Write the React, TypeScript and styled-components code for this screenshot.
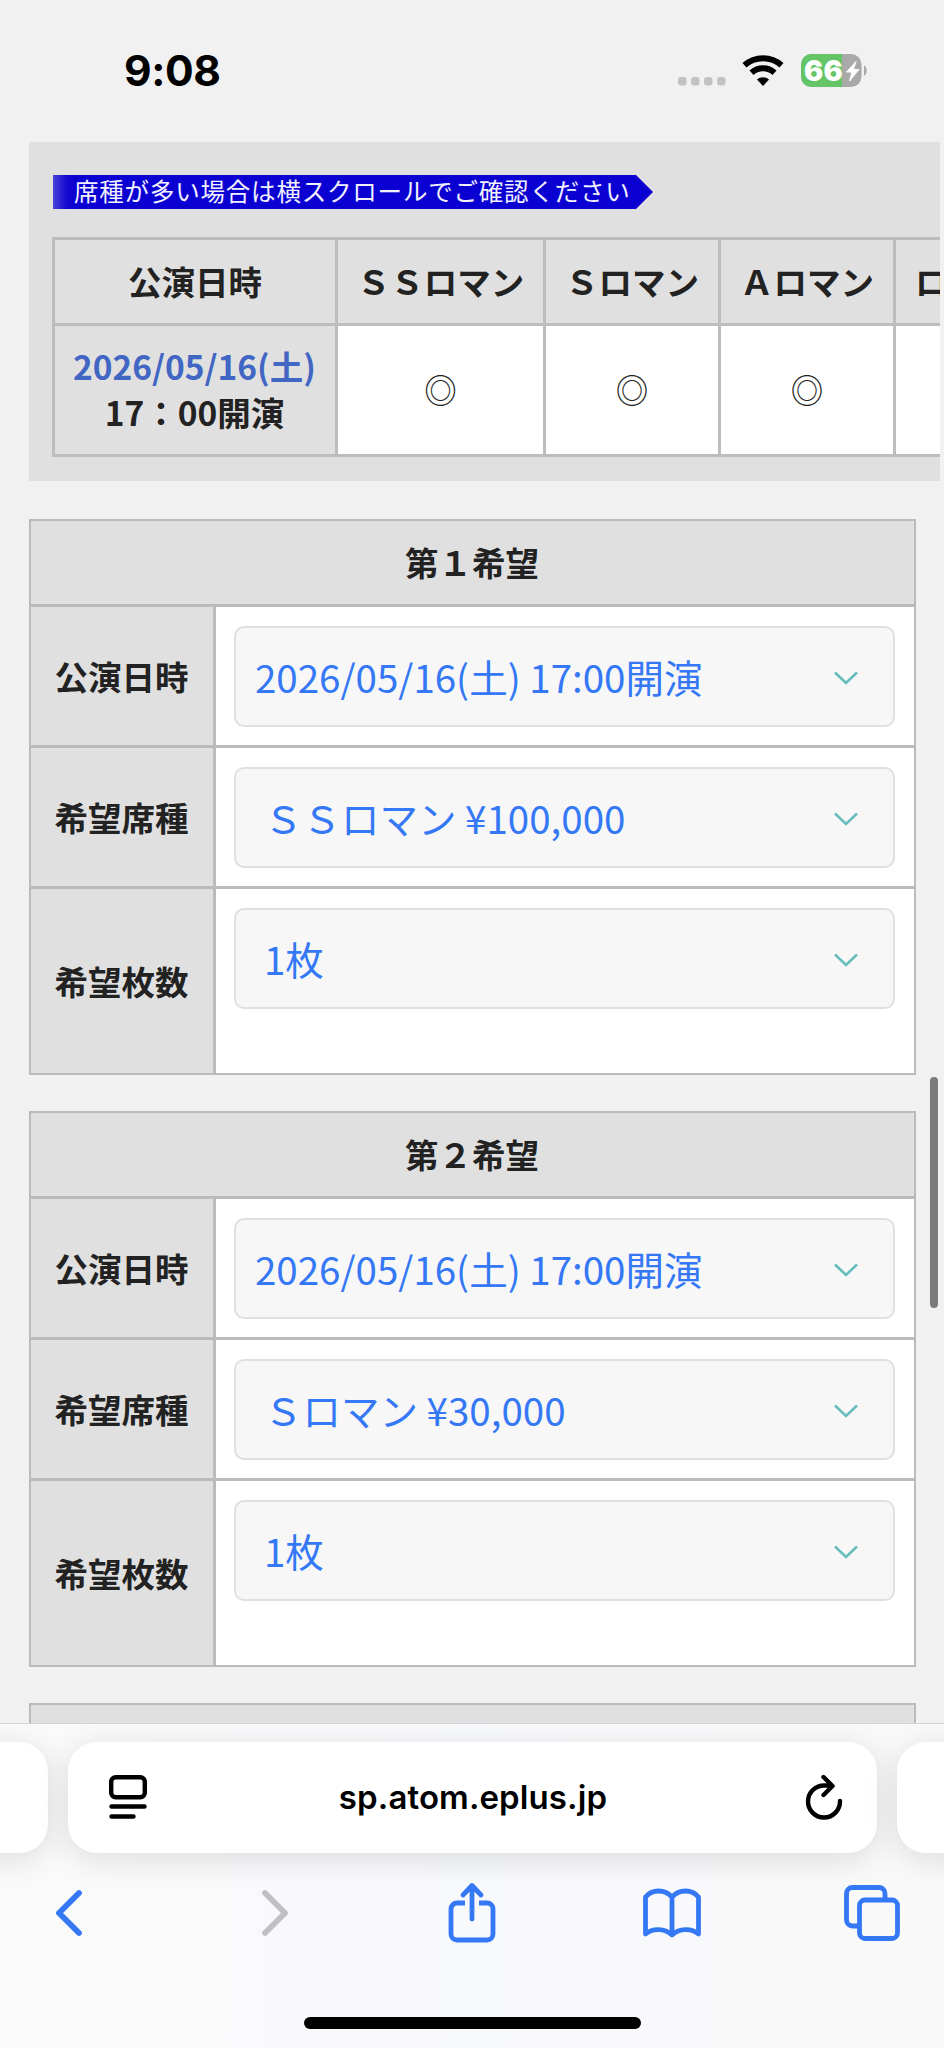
import React from 'react';
import styled, { createGlobalStyle } from 'styled-components';

const GlobalStyle = createGlobalStyle`
  * { box-sizing: border-box; }
  html, body { margin: 0; padding: 0; }
  body {
    background: #f1f1f1;
    color: #222;
    font-family: "Noto Sans CJK JP", sans-serif;
  }
`;

const Screen = styled.div`
  position: relative;
  width: 944px;
  height: 2048px;
  overflow: hidden;
  background: #f1f1f1;
  display: flex;
  flex-direction: column;
`;

const StatusBar = styled.header`
  flex: none;
  height: 142px;
  display: flex;
  align-items: flex-start;
  justify-content: space-between;
  padding: 46px 75px 0 124px;
`;

const Clock = styled.div`
  font: 700 42.5px/49px Inter, sans-serif;
  letter-spacing: -0.4px;
  color: #000;
`;

const StatusIcons = styled.div`
  display: flex;
  align-items: flex-start;
  svg { display: block; }
`;

const StatusGlyph = styled.div<{ $top: number; $gap: number }>`
  margin: ${(p) => p.$top}px ${(p) => p.$gap}px 0 0;
`;

const Battery = styled.div`
  position: relative;
  width: 68px;
  height: 33px;
  margin: 8px 0 0 17px;
`;

const BatteryLevel = styled.span`
  position: absolute;
  left: 3px;
  top: 0;
  font: 900 28.5px/34px Inter, sans-serif;
  letter-spacing: 0.2px;
  color: #fff;
`;

const Page = styled.main`
  flex: none;
  height: 1581px;
  overflow: hidden;
  padding-left: 29px;
  display: flex;
  flex-direction: column;
`;

const AvailabilityPanel = styled.section`
  flex: none;
  width: 911px;
  height: 339px;
  padding: 33px 0 0 23px;
  background: #e0e0e0;
  overflow: hidden;
`;

const ScrollHint = styled.div`
  width: 600px;
  height: 34px;
  padding-left: 21px;
  margin-left: 1px;
  background: linear-gradient(90deg, #4a44d8 0, #1208d0 14px, #0b00d2 22px);
  clip-path: polygon(0 0, 583px 0, 100% 50%, 583px 100%, 0 100%);
  color: #f0f0ff;
  font-size: 24.5px;
  line-height: 32px;
  letter-spacing: 0.8px;
  white-space: nowrap;
`;

const SeatTable = styled.table`
  border-collapse: collapse;
  table-layout: fixed;
  width: 1018px;
  margin-top: 28px;
`;

const SeatHead = styled.th<{ $left?: boolean }>`
  height: 86px;
  padding: 0 0 2px ${(p) => (p.$left ? 19 : 0)}px;
  border: 3px solid #bdbdbd;
  text-align: ${(p) => (p.$left ? 'left' : 'center')};
  font-size: 33.5px;
  font-weight: 700;
  line-height: 46px;
  white-space: nowrap;
`;

const SeatDate = styled(SeatHead)`
  height: 131px;
  padding: 0 1px 2px 0;
`;

const DateText = styled.span`
  display: block;
  color: #4266c4;
`;

const SeatMark = styled.td`
  padding: 0 0 2px;
  border: 3px solid #bdbdbd;
  background: #fff;
  text-align: center;
  font-size: 32.5px;
  line-height: 46px;
`;

const WishTable = styled.section`
  flex: none;
  width: 887px;
  margin-top: 38px;
  border: 2px solid #bbb;
  background: #bbb;
  display: grid;
  grid-template-columns: 182px 1fr;
  gap: 3px;
  & + & { margin-top: 36px; }
`;

const WishTitle = styled.h2`
  grid-column: 1 / -1;
  height: 83px;
  margin: 0;
  padding: 0 1px 2px 0;
  background: #e0e0e0;
  display: flex;
  align-items: center;
  justify-content: center;
  font-size: 33.5px;
  line-height: 46px;
`;

const FieldLabel = styled.div`
  background: #e0e0e0;
  display: flex;
  align-items: center;
  justify-content: center;
  padding: 0 1px 1px 0;
  font-size: 33.5px;
  font-weight: 700;
  line-height: 46px;
`;

const FieldCell = styled.div<{ $last?: boolean }>`
  height: ${(p) => (p.$last ? 184 : 138)}px;
  padding: 19px 19px 0 18px;
  background: #fff;
`;

const SelectBox = styled.div<{ $indent: number }>`
  height: 101px;
  border: 2px solid #e0e0e0;
  border-radius: 10px;
  background: #f7f7f7;
  padding: 0 35px 2px ${(p) => p.$indent}px;
  display: flex;
  align-items: center;
  justify-content: space-between;
  color: #3478f6;
  font-size: 38.5px;
  line-height: 56px;
  white-space: pre;
  svg { margin-top: 4px; }
`;

const ScrollThumb = styled.div`
  position: absolute;
  left: 930px;
  top: 1077px;
  width: 8px;
  height: 231px;
  border-radius: 4px;
  background: #7b7b7b;
`;

const BrowserBar = styled.footer`
  flex: none;
  height: 325px;
  overflow: hidden;
  border-top: 1px solid #d4d4d4;
  background: linear-gradient(90deg, #fafafa, #f8f9fc 50%, #f9f9f9);
  display: flex;
  flex-direction: column;
`;

const TabStrip = styled.div`
  flex: none;
  display: flex;
  gap: 20px;
  margin-top: 18px;
  margin-left: -60px;
  width: 1064px;
`;

const TabCard = styled.div<{ $width: number }>`
  flex: none;
  width: ${(p) => p.$width}px;
  height: 111px;
  border-radius: 29px;
  background: #fff;
  box-shadow: 0 6px 32px rgba(0, 0, 0, 0.12);
  display: flex;
  align-items: center;
  justify-content: space-between;
  padding: 0 34px 1px 41px;
  svg { display: block; }
`;

const Address = styled.div`
  margin: 0 6px 1px 0;
  font: 600 33px/44px Inter, sans-serif;
  letter-spacing: 0.1px;
  color: #000;
`;

const Toolbar = styled.nav`
  flex: none;
  width: 1000px;
  height: 80px;
  margin: 20px 0 0 -28px;
  display: grid;
  grid-template-columns: repeat(5, 200px);
  place-items: center;
  svg { display: block; overflow: visible; }
`;

const ToolButton = styled.span<{ $shift?: number }>`
  display: block;
  margin-left: ${(p) => p.$shift ?? 0}px;
`;

const HomeIndicator = styled.div`
  width: 337px;
  height: 12px;
  margin: 64px auto 0;
  border-radius: 6px;
  background: #000;
`;

const SignalIcon = () => (
  <svg width="48" height="9" viewBox="0 0 48 9" fill="#c2c2c2">
    {[0, 13, 26, 39].map((x) => <rect key={x} x={x} y="0" width="8.5" height="8.5" rx="3" />)}
  </svg>
);

const WifiIcon = () => (
  <svg width="42" height="32" viewBox="0 0 42 32" fill="none" stroke="#000" strokeWidth="6">
    <path d="M2.5 10.2C13 .8 29 .8 39.5 10.2" />
    <path d="M9.5 17.8C16 11.8 26 11.8 32.5 17.8" />
    <path d="M21 31L15 24.6c3.5-3.2 8.5-3.2 12 0z" fill="#000" stroke="none" />
  </svg>
);

const BatteryShape = () => (
  <svg width="68" height="33" viewBox="0 0 68 33">
    <defs><clipPath id="cell"><rect width="60.5" height="33" rx="10.5" /></clipPath></defs>
    <g clipPath="url(#cell)">
      <rect width="61" height="33" fill="#a9a9a9" />
      <rect width="41" height="33" fill="#65c466" />
    </g>
    <path d="M63 11.5c3.6 1.2 3.6 9 0 10.2z" fill="#a9a9a9" />
    <path d="M55 7.5L45.5 18h5.5L48.5 27 58 15.5h-5.6z" fill="#fff" stroke="#fff" strokeLinejoin="round" />
  </svg>
);

const ChevronDown = () => (
  <svg width="24" height="14" viewBox="0 0 24 14" fill="none" stroke="#67bdbd" strokeWidth="2.6">
    <path d="M1 1.5L12 12 23 1.5" />
  </svg>
);

const PageMenuIcon = () => (
  <svg width="38" height="44" viewBox="0 0 38 44" fill="none" stroke="#000" strokeWidth="4.4" strokeLinecap="round">
    <rect x="2.2" y="2.2" width="33.6" height="20" rx="4.5" />
    <path d="M2.5 31.5h33M2.5 41.5h22" />
  </svg>
);

const ReloadIcon = () => (
  <svg width="38" height="46" viewBox="0 0 38 46" fill="none" stroke="#000" strokeWidth="4.4" strokeLinecap="round" strokeLinejoin="round">
    <path d="M26 11.5H20A16 16 0 1 0 35 27" />
    <path d="M18.500 3L27.5 12 18.5 21" />
  </svg>
);

const BackIcon = () => (
  <svg width="28" height="46" viewBox="0 0 28 46" fill="none" stroke="#3478f6" strokeWidth="5.8" strokeLinecap="round" strokeLinejoin="round">
    <path d="M24 3L4 23l20 20" />
  </svg>
);

const ForwardIcon = () => (
  <svg width="28" height="46" viewBox="0 0 28 46" fill="none" stroke="#bfc0c2" strokeWidth="5.8" strokeLinecap="round" strokeLinejoin="round">
    <path d="M4 3l20 20L4 43" />
  </svg>
);

const ShareIcon = () => (
  <svg width="50" height="60" viewBox="0 0 50 60" fill="none" stroke="#3478f6" strokeWidth="4.8" strokeLinecap="round" strokeLinejoin="round">
    <path d="M18 20H10a6 6 0 0 0-6 6V51a6 6 0 0 0 6 6h30a6 6 0 0 0 6-6V26a6 6 0 0 0-6-6H32" strokeLinecap="butt" />
    <path d="M25 36V3M16 12L25 2.5 34 12" />
  </svg>
);

const BookIcon = () => (
  <svg width="58" height="50" viewBox="0 0 58 50" fill="none" stroke="#3478f6" strokeWidth="4.8" strokeLinecap="round" strokeLinejoin="round">
    <path d="M29 9C22 1 9 1 2.5 9v37c7-6 19-6 26.500 1 7.5-7 19.5-7 26.5-1V9C49 1 36 1 29 9zM29 9v38" />
  </svg>
);

const TabsIcon = () => (
  <svg width="56" height="56" viewBox="0 0 56 56" fill="none" stroke="#3478f6" strokeWidth="4.8">
    <path d="M14 41H8.5a6 6 0 0 1-6-6v-26.500a6 6 0 0 1 6-6h26.5a6 6 0 0 1 6 6V14" />
    <rect x="15.5" y="15" width="38" height="38.5" rx="5.5" />
  </svg>
);

type Field = { label: string; value: string; indent: number };
type Wish = { title: string; fields: Field[] };

const wishes: Wish[] = [
  {
    title: '第１希望',
    fields: [
      { label: '公演日時', value: '2026/05/16(土) 17:00開演', indent: 19 },
      { label: '希望席種', value: 'ＳＳロマン ¥100,000', indent: 28 },
      { label: '希望枚数', value: '1枚', indent: 28 },
    ],
  },
  {
    title: '第２希望',
    fields: [
      { label: '公演日時', value: '2026/05/16(土) 17:00開演', indent: 19 },
      { label: '希望席種', value: 'Ｓロマン ¥30,000', indent: 28 },
      { label: '希望枚数', value: '1枚', indent: 28 },
    ],
  },
  { title: '', fields: [] },
];

export default function App() {
  return (
    <>
      <GlobalStyle />
      <Screen>
        <StatusBar>
          <Clock>9:08</Clock>
          <StatusIcons>
            <StatusGlyph $top={31} $gap={16}><SignalIcon /></StatusGlyph>
            <StatusGlyph $top={9} $gap={0}><WifiIcon /></StatusGlyph>
            <Battery>
              <BatteryShape />
              <BatteryLevel>66</BatteryLevel>
            </Battery>
          </StatusIcons>
        </StatusBar>
        <Page>
          <AvailabilityPanel>
            <ScrollHint>席種が多い場合は横スクロールでご確認ください</ScrollHint>
            <SeatTable>
              <colgroup>
                <col width="283" /><col width="208" /><col width="175" /><col width="175" /><col width="177" />
              </colgroup>
              <tbody>
                <tr>
                  <SeatHead>公演日時</SeatHead>
                  <SeatHead>ＳＳロマン</SeatHead>
                  <SeatHead>Ｓロマン</SeatHead>
                  <SeatHead>Ａロマン</SeatHead>
                  <SeatHead $left>ロマン</SeatHead>
                </tr>
                <tr>
                  <SeatDate><DateText>2026/05/16(土)</DateText>17：00開演</SeatDate>
                  <SeatMark>◎</SeatMark>
                  <SeatMark>◎</SeatMark>
                  <SeatMark>◎</SeatMark>
                  <SeatMark />
                </tr>
              </tbody>
            </SeatTable>
          </AvailabilityPanel>
          {wishes.map((wish, w) => (
            <WishTable key={w}>
              <WishTitle>{wish.title}</WishTitle>
              {wish.fields.map((f, i) => (
                <React.Fragment key={f.label}>
                  <FieldLabel>{f.label}</FieldLabel>
                  <FieldCell $last={i === 2}>
                    <SelectBox $indent={f.indent}>
                      {f.value}
                      <ChevronDown />
                    </SelectBox>
                  </FieldCell>
                </React.Fragment>
              ))}
            </WishTable>
          ))}
        </Page>
        <BrowserBar>
          <TabStrip>
            <TabCard $width={108} />
            <TabCard $width={809}>
              <PageMenuIcon />
              <Address>sp.atom.eplus.jp</Address>
              <ReloadIcon />
            </TabCard>
            <TabCard $width={108} />
          </TabStrip>
          <Toolbar>
            <ToolButton $shift={-6}><BackIcon /></ToolButton>
            <ToolButton $shift={6}><ForwardIcon /></ToolButton>
            <ToolButton><ShareIcon /></ToolButton>
            <ToolButton><BookIcon /></ToolButton>
            <ToolButton><TabsIcon /></ToolButton>
          </Toolbar>
          <HomeIndicator />
        </BrowserBar>
        <ScrollThumb />
      </Screen>
    </>
  );
}
